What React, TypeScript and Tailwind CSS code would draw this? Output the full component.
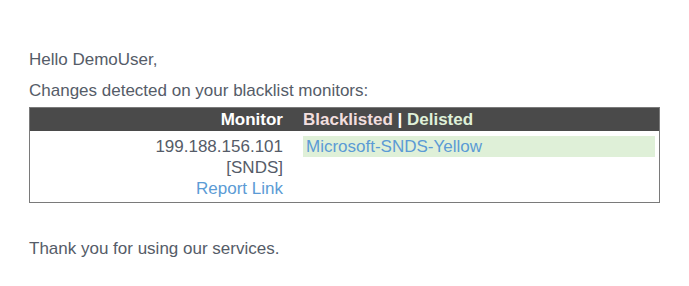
import React from "react";

type Row = {
  ip: string;
  tag: string;
  listed: string[];
};

const rows: Row[] = [
  { ip: "199.188.156.101", tag: "[SNDS]", listed: ["Microsoft-SNDS-Yellow"] },
];

function App() {
  return (
    <div
      className="w-[689px] h-[286px] bg-white text-[#555c68] text-[17px] leading-[21px]"
      style={{ fontFamily: '"Liberation Sans", Arial, sans-serif' }}
    >
      <div className="pl-[29px] pr-[29px] pt-[49px]">
        <p>Hello DemoUser,</p>
        <p className="mt-[10px]">Changes detected on your blacklist monitors:</p>

        {/* monitor table */}
        <div className="mt-[6px] w-[631px] border border-[#7a7a7a]">
          <div className="flex bg-[#4a4a4a] h-[23px] items-center font-bold">
            <div className="w-[269px] pr-[16px] text-right text-white">Monitor</div>
            <div className="pl-[4px]">
              <span className="text-[#f2dede]">Blacklisted</span>
              <span className="text-white"> | </span>
              <span className="text-[#dff0d8]">Delisted</span>
            </div>
          </div>
          {rows.map((r) => (
            <div key={r.ip} className="flex pt-[5px] pb-[3px]">
              <div className="w-[269px] pr-[16px] text-right flex flex-col">
                <span>{r.ip}</span>
                <span>{r.tag}</span>
                <a className="text-[#5b9bd5]">Report Link</a>
              </div>
              <div className="flex-1 pl-[4px] pr-[4px]">
                {r.listed.map((l) => (
                  <div key={l} className="bg-[#dff0d8] pl-[3px] text-[#5b9bd5]">
                    {l}
                  </div>
                ))}
              </div>
            </div>
          ))}
        </div>

        <p className="mt-[35px]">Thank you for using our services.</p>
      </div>
    </div>
  );
}

export default App;
